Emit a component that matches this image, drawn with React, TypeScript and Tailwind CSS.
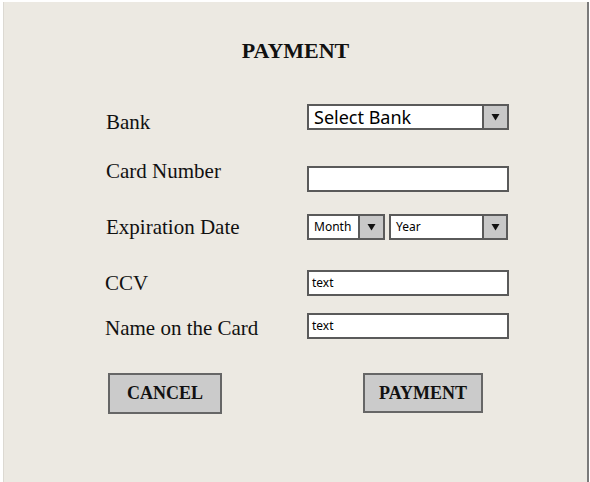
import React from 'react';

const serif = "font-['Liberation_Serif','Times_New_Roman',serif]";
const comic = "font-['Comic_Sans_MS','Noto_Sans',sans-serif]";

function Arrow({ className = '' }: { className?: string }) {
  return (
    <div className={`flex items-center justify-center bg-[#c8c8c8] border-l-2 border-[#5a5a5a] ${className}`}>
      <svg width="9" height="8" viewBox="0 0 9 8">
        <path d="M0.5 1 L8.5 1 L4.5 7.5 Z" fill="#111" />
      </svg>
    </div>
  );
}

function Select({ label, width, arrowWidth, textClass }: { label: string; width: string; arrowWidth: string; textClass: string }) {
  return (
    <div className={`flex h-[26px] bg-white border-2 border-[#5a5a5a] ${width}`}>
      <span className={`flex-1 flex items-center pl-[5px] text-black ${comic} ${textClass}`}>{label}</span>
      <Arrow className={arrowWidth} />
    </div>
  );
}

function TextBox({ value }: { value?: string }) {
  return (
    <div className={`flex items-center h-[26px] w-[202px] bg-white border-2 border-[#5a5a5a] pl-[3px] text-[12px] text-black ${comic}`}>
      {value}
    </div>
  );
}

function Label({ children, className = '' }: { children: React.ReactNode; className?: string }) {
  return (
    <div className={`w-[201px] text-[21px] leading-[24px] text-[#111] ${serif} ${className}`}>{children}</div>
  );
}

export default function App() {
  return (
    <div className="w-[590px] h-[482px] bg-white overflow-hidden">
      <div className="ml-[3px] mt-[2px] w-[586px] h-[480px] bg-[#ece9e2] border-l border-l-[#dcd9d2] border-r-2 border-r-[#7a7a7a]">
        <h1 className={`pt-[36px] text-center text-[22px] leading-[26px] font-bold text-[#111] ${serif}`}>PAYMENT</h1>

        <div className="pl-[102px]">
          {/* Bank */}
          <div className="flex items-start mt-[40px]">
            <Label className="mt-[6px]">Bank</Label>
            <Select label="Select Bank" width="w-[202px]" arrowWidth="w-[25px]" textClass="text-[18px]" />
          </div>

          {/* Card number */}
          <div className="flex items-start mt-[25px]">
            <Label>Card Number</Label>
            <div className="mt-[7px]">
              <TextBox />
            </div>
          </div>

          {/* Expiration */}
          <div className="flex items-start mt-[22px]">
            <Label className="mt-[1px]">Expiration Date</Label>
            <div className="flex gap-[4px]">
              <Select label="Month" width="w-[78px]" arrowWidth="w-[25px]" textClass="text-[12px]" />
              <Select label="Year" width="w-[119px]" arrowWidth="w-[24px]" textClass="text-[12px]" />
            </div>
          </div>

          {/* CCV */}
          <div className="flex items-start mt-[30px]">
            <Label className="mt-[1px] -ml-[1px] mr-[1px]">CCV</Label>
            <TextBox value="text" />
          </div>

          {/* Name */}
          <div className="flex items-start mt-[17px]">
            <Label className="mt-[3px] -ml-[1px] mr-[1px]">Name on the Card</Label>
            <TextBox value="text" />
          </div>
        </div>

        <div className="flex items-start mt-[33px] pl-[104px]">
          <button className={`w-[114px] h-[41px] bg-[#cbcbcb] border-2 border-[#666] text-[18px] font-bold text-[#111] ${serif}`}>
            CANCEL
          </button>
          <button className={`ml-[141px] w-[120px] h-[40px] bg-[#cbcbcb] border-2 border-[#666] text-[18px] font-bold text-[#111] ${serif}`}>
            PAYMENT
          </button>
        </div>
      </div>
    </div>
  );
}
